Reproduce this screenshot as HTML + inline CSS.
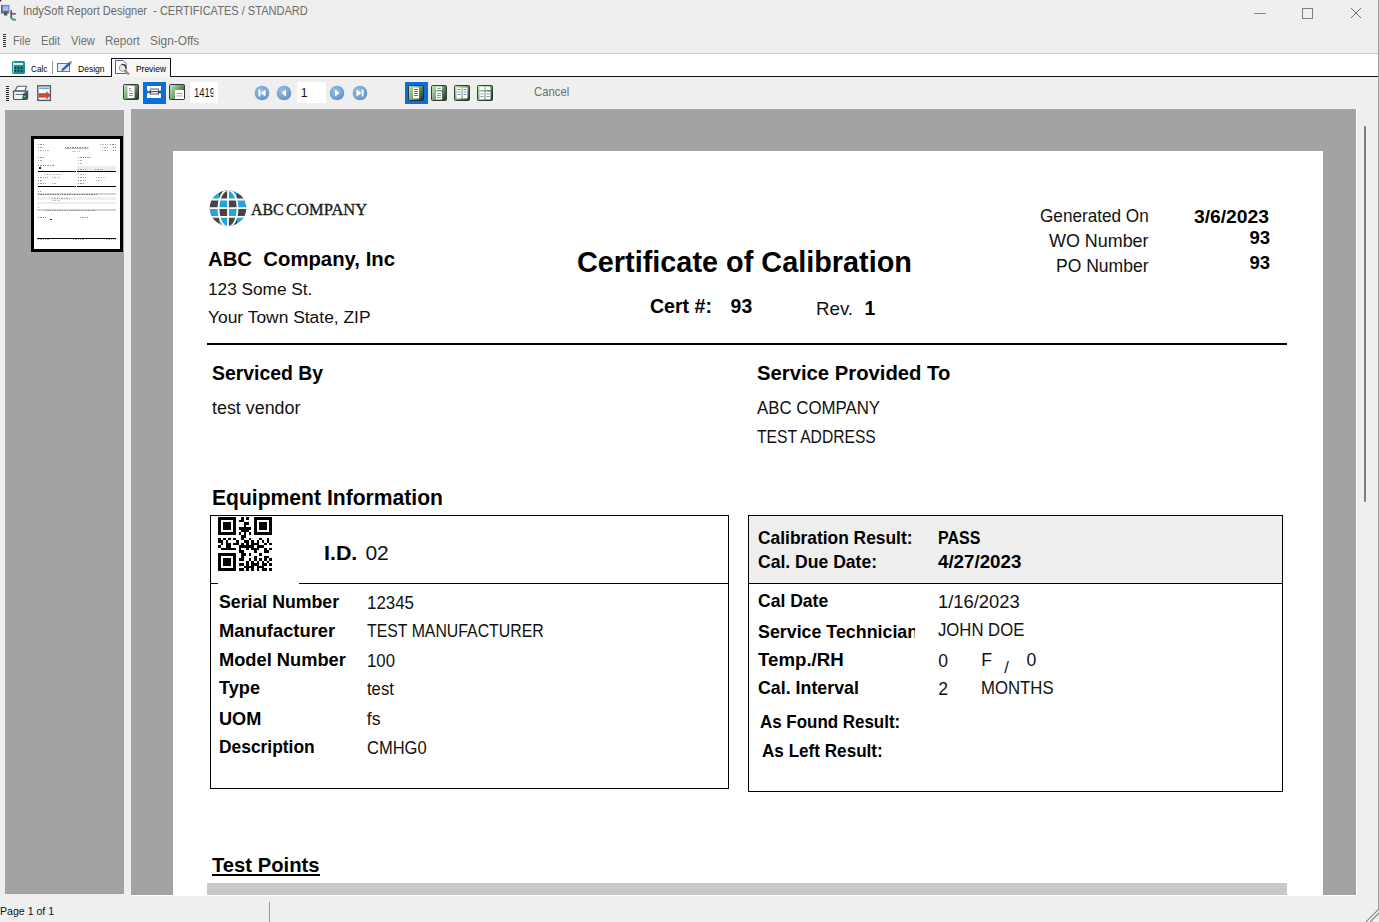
<!DOCTYPE html>
<html><head><meta charset="utf-8"><title>IndySoft Report Designer</title>
<style>
html,body{margin:0;padding:0;width:1379px;height:922px;overflow:hidden;background:#efefef;}
body{position:relative;font-family:"Liberation Sans", sans-serif;}
.t{position:absolute;white-space:pre;line-height:1;}
.r{position:absolute;}
svg.r{overflow:visible;}
</style></head><body>
<div class="r" style="left:0px;top:0px;width:1379px;height:922px;background:#efefef;"></div>
<svg class="r" style="left:0px;top:0px" width="20" height="24" viewBox="0 0 20 24">
<rect x="0" y="0" width="1.2" height="1.5" fill="#222"/>
<rect x="1.2" y="4.9" width="8.2" height="8.6" fill="#6a86c0"/><rect x="2.6" y="6.3" width="5.6" height="4.4" fill="#a9c0ee"/><rect x="1.2" y="4.9" width="1.2" height="8.6" fill="#4a5a80"/>
<path d="M3.8 11.2 L7.4 11.2 L7.4 15.6 L4 15.6 Z" fill="#4f5a4a"/>
<rect x="10.4" y="10.2" width="1.7" height="8" fill="#7a3f7a"/><rect x="10.4" y="13" width="5.5" height="1.6" fill="#934a8a"/>
<path d="M11.2 16.8 Q11.4 20.2 15.9 19.8" stroke="#1f9d9d" stroke-width="1.9" fill="none"/>
</svg>
<div class="t" style="left:22.50px;top:6.43px;font-size:11.9px;color:#6a6a6a;transform:scaleX(0.9288);transform-origin:0 0;">IndySoft Report Designer&nbsp; - CERTIFICATES / STANDARD</div>
<div class="r" style="left:1254px;top:13px;width:12px;height:1px;background:#858585;"></div>
<div class="r" style="left:1302px;top:8px;width:11px;height:11px;border:1px solid #808080;box-sizing:border-box;"></div>
<svg class="r" style="left:1350px;top:7px" width="12" height="12" viewBox="0 0 12 12"><path d="M1 1 L11 11 M11 1 L1 11" stroke="#707070" stroke-width="1"/></svg>
<svg class="r" style="left:3px;top:34px" width="3" height="13"><g fill="#333"><rect x="0" y="0" width="3" height="1"/><rect x="0" y="2" width="3" height="1"/><rect x="0" y="4" width="3" height="1"/><rect x="0" y="6" width="3" height="1"/><rect x="0" y="8" width="3" height="1"/><rect x="0" y="10" width="3" height="1"/><rect x="0" y="12" width="3" height="1"/></g></svg>
<div class="t" style="left:12.60px;top:35.44px;font-size:12px;color:#707070;transform:scaleX(0.9006);transform-origin:0 0;">File</div>
<div class="t" style="left:40.80px;top:35.44px;font-size:12px;color:#707070;transform:scaleX(0.9275);transform-origin:0 0;">Edit</div>
<div class="t" style="left:70.80px;top:35.44px;font-size:12px;color:#707070;transform:scaleX(0.9264);transform-origin:0 0;">View</div>
<div class="t" style="left:105.30px;top:35.44px;font-size:12px;color:#707070;transform:scaleX(0.9639);transform-origin:0 0;">Report</div>
<div class="t" style="left:150.40px;top:35.44px;font-size:12px;color:#707070;transform:scaleX(0.9880);transform-origin:0 0;">Sign-Offs</div>
<div class="r" style="left:0px;top:53px;width:1379px;height:1px;background:#c9c9c9;"></div>
<div class="r" style="left:0px;top:54px;width:1379px;height:22px;background:#fff;"></div>
<div class="r" style="left:0px;top:76px;width:1379px;height:1px;background:#111;"></div>
<div class="r" style="left:111px;top:58px;width:60px;height:19px;background:#f6f6f6;border:1px solid #111;border-bottom:none;box-sizing:border-box;"></div>
<svg class="r" style="left:12px;top:61px" width="13" height="13" viewBox="0 0 13 13">
<rect x="0" y="0" width="13" height="13" rx="1.5" fill="#1f8f8f"/><rect x="2" y="2" width="9" height="2" fill="#d8f0f0"/>
<g fill="#062a2a"><rect x="2.5" y="6" width="1.6" height="1.6"/><rect x="5.7" y="6" width="1.6" height="1.6"/><rect x="8.9" y="6" width="1.6" height="1.6"/><rect x="2.5" y="9" width="1.6" height="1.6"/><rect x="5.7" y="9" width="1.6" height="1.6"/><rect x="8.9" y="9" width="1.6" height="1.6"/></g><rect x="1" y="1" width="1" height="11" fill="#8fe0e0"/></svg>
<div class="t" style="left:31.30px;top:64.10px;font-size:9.8px;color:#000;transform:scaleX(0.8316);transform-origin:0 0;">Calc</div>
<div class="r" style="left:52px;top:61px;width:1px;height:13px;background:#9a9a9a;"></div>
<svg class="r" style="left:57px;top:60px" width="17" height="13" viewBox="0 0 17 13">
<rect x="0.5" y="3.5" width="12" height="8" fill="#e4ecfa" stroke="#5573b8"/>
<path d="M4 10 L12 2 L15 1 L14 4 L6 11 Z" fill="#3b5fb3"/><path d="M12 2 L15 1 L14 4 Z" fill="#e0b040"/>
</svg>
<div class="t" style="left:78.30px;top:64.10px;font-size:9.8px;color:#000;transform:scaleX(0.8714);transform-origin:0 0;">Design</div>
<svg class="r" style="left:114px;top:59px" width="18" height="18" viewBox="0 0 18 18">
<path d="M1.5 1.5 L9 1.5 L12 4.5 L12 14.5 L1.5 14.5 Z" fill="#fbfcff" stroke="#55608a" stroke-width="1"/>
<circle cx="8.5" cy="9" r="3.3" fill="#e4efdc" stroke="#8a96a0" stroke-width="0.9"/>
<path d="M7.5 5.5 A3.4 3.4 0 0 1 11.8 9.5" stroke="#2a3040" stroke-width="1.3" fill="none"/>
<path d="M10.8 11.5 L15 15.5" stroke="#a8865a" stroke-width="2.3"/>
</svg>
<div class="t" style="left:135.80px;top:64.10px;font-size:9.8px;color:#000;transform:scaleX(0.8599);transform-origin:0 0;">Preview</div>
<svg class="r" style="left:6px;top:86px" width="3" height="15"><g fill="#222"><rect y="0" width="3" height="1"/><rect y="2" width="3" height="1"/><rect y="4" width="3" height="1"/><rect y="6" width="3" height="1"/><rect y="8" width="3" height="1"/><rect y="10" width="3" height="1"/><rect y="12" width="3" height="1"/><rect y="14" width="3" height="1"/></g></svg>
<svg class="r" style="left:12px;top:85px" width="18" height="16" viewBox="0 0 18 16">
<path d="M5.4 1.3 L14.5 1.3 L13 6 L3 6 Z" fill="#fafafa" stroke="#5a5f6e" stroke-width="1.1"/>
<path d="M3.5 3.5 L4 3.5" stroke="#999" stroke-width="1"/>
<path d="M1.5 6.2 L15.6 6.2 L15.6 13 Q15.6 14.5 14 14.5 L3 14.5 Q1.5 14.5 1.5 13 Z" fill="#f2f2f4" stroke="#4e5464" stroke-width="1.2"/>
<path d="M3.5 9.5 L12.5 9.5" stroke="#6a7080" stroke-width="1"/>
<path d="M11.5 8 L15.6 6.5 L15.6 13 Q15.6 14.5 14 14.5 L10 14.5 Z" fill="#2f5e4a"/>
<rect x="11.8" y="10.7" width="1.6" height="1.4" fill="#6fe08f"/>
</svg>
<svg class="r" style="left:37px;top:85px" width="15" height="16" viewBox="0 0 15 16">
<rect x="0.8" y="0.8" width="12.6" height="14.6" fill="#fdfdfd" stroke="#4f5d6d" stroke-width="1.4"/>
<rect x="2.3" y="2.5" width="9.5" height="1.6" fill="#6f9fcf"/>
<path d="M2 8.6 L9.5 8.6 L9.5 6.8 L13.6 10.3 L9.5 14 L9.5 12.2 L2 12.2 Z" fill="#d9473a" stroke="#9a2e2a" stroke-width="0.5"/>
</svg>
<svg class="r" style="left:123px;top:84px" width="16" height="16" viewBox="0 0 16 16">
<defs><linearGradient id="g123" x1="0" x2="1" y1="0.2" y2="0.8"><stop offset="0" stop-color="#b9e0b0"/><stop offset="0.5" stop-color="#6f9f70"/><stop offset="1" stop-color="#263d2b"/></linearGradient></defs>
<rect x="0.5" y="0.5" width="15" height="15" rx="1" fill="url(#g123)" stroke="#243026" stroke-width="0.9"/><rect x="4.5" y="2" width="7" height="12" fill="#fff"/><g fill="#7a8aa0"><rect x="6" y="4" width="2" height="0.9"/><rect x="6" y="6.5" width="3" height="0.9"/><rect x="6" y="9" width="4" height="0.9"/><rect x="6" y="11" width="4" height="0.9"/></g></svg>
<div class="r" style="left:143px;top:82px;width:23px;height:22px;background:#0a6fd8;"></div>
<svg class="r" style="left:146px;top:85px" width="17" height="16" viewBox="0 0 17 16">
<path d="M1 1 L15 1 L15 5 L13 7 L15 9 L15 13 L1 13 L1 9 L3 7 L1 5 Z" fill="#fff"/><g fill="#4a5a6a"><rect x="4" y="3.5" width="9" height="1"/><rect x="4" y="6" width="9" height="1.2"/><rect x="4" y="8.5" width="9" height="1"/></g>
<path d="M2 7 L5 4.5 L5 9.5 Z" fill="#3a4a5a"/><path d="M15 7 L12 4.5 L12 9.5 Z" fill="#3a4a5a"/>
</svg>
<svg class="r" style="left:169px;top:84px" width="16" height="16" viewBox="0 0 16 16">
<defs><linearGradient id="g169" x1="0" x2="1" y1="0.2" y2="0.8"><stop offset="0" stop-color="#b9e0b0"/><stop offset="0.5" stop-color="#6f9f70"/><stop offset="1" stop-color="#263d2b"/></linearGradient></defs>
<rect x="0.5" y="0.5" width="15" height="15" rx="1" fill="url(#g169)" stroke="#243026" stroke-width="0.9"/><rect x="6" y="6" width="9" height="9" fill="#fff"/><g fill="#8a9aaa"><rect x="7.5" y="9" width="6" height="0.9"/><rect x="7.5" y="11.5" width="6" height="0.9"/></g></svg>
<div class="r" style="left:190px;top:82px;width:28px;height:21px;background:#fff;"></div>
<div class="t" style="left:193.50px;top:87.07px;font-size:12.2px;color:#111;transform:scaleX(0.7736);transform-origin:0 0;clip-path:inset(-5px 2px -5px -5px);">1419</div>
<svg class="r" style="left:253.5px;top:85px" width="16" height="16" viewBox="0 0 16 16">
<defs><radialGradient id="n261.5" cx="0.4" cy="0.35" r="0.7"><stop offset="0" stop-color="#9cc0e4"/><stop offset="1" stop-color="#5f91c4"/></radialGradient></defs>
<circle cx="8" cy="8" r="7.3" fill="url(#n261.5)"/><rect x="4.5" y="4.5" width="1.8" height="7" fill="#fff"/><path d="M11.5 4.5 L6.5 8 L11.5 11.5 Z" fill="#fff"/></svg>
<svg class="r" style="left:276.3px;top:85px" width="16" height="16" viewBox="0 0 16 16">
<defs><radialGradient id="n284.3" cx="0.4" cy="0.35" r="0.7"><stop offset="0" stop-color="#9cc0e4"/><stop offset="1" stop-color="#5f91c4"/></radialGradient></defs>
<circle cx="8" cy="8" r="7.3" fill="url(#n284.3)"/><path d="M10 4.5 L5.5 8 L10 11.5 Z" fill="#fff"/></svg>
<div class="r" style="left:297px;top:82px;width:29px;height:21px;background:#fff;"></div>
<div class="t" style="left:300.80px;top:87.17px;font-size:12.2px;color:#111;">1</div>
<svg class="r" style="left:329.2px;top:85px" width="16" height="16" viewBox="0 0 16 16">
<defs><radialGradient id="n337.2" cx="0.4" cy="0.35" r="0.7"><stop offset="0" stop-color="#9cc0e4"/><stop offset="1" stop-color="#5f91c4"/></radialGradient></defs>
<circle cx="8" cy="8" r="7.3" fill="url(#n337.2)"/><path d="M6 4.5 L10.5 8 L6 11.5 Z" fill="#fff"/></svg>
<svg class="r" style="left:352.1px;top:85px" width="16" height="16" viewBox="0 0 16 16">
<defs><radialGradient id="n360.1" cx="0.4" cy="0.35" r="0.7"><stop offset="0" stop-color="#9cc0e4"/><stop offset="1" stop-color="#5f91c4"/></radialGradient></defs>
<circle cx="8" cy="8" r="7.3" fill="url(#n360.1)"/><path d="M4.5 4.5 L9.5 8 L4.5 11.5 Z" fill="#fff"/><rect x="9.7" y="4.5" width="1.8" height="7" fill="#fff"/></svg>
<div class="r" style="left:405px;top:82px;width:23px;height:22px;background:#0a6fd8;"></div>
<svg class="r" style="left:408px;top:84.5px" width="16" height="16" viewBox="0 0 16 16">
<defs><linearGradient id="g408" x1="0" x2="1" y1="0.2" y2="0.8"><stop offset="0" stop-color="#b9e0b0"/><stop offset="0.5" stop-color="#6f9f70"/><stop offset="1" stop-color="#263d2b"/></linearGradient></defs>
<rect x="0.5" y="0.5" width="15" height="15" rx="1" fill="url(#g408)" stroke="#243026" stroke-width="0.9"/><rect x="5" y="2.5" width="6" height="11" fill="#fff"/><g fill="#3a6ad0"><rect x="6" y="4" width="4" height="0.9"/><rect x="6" y="6" width="4" height="0.9"/><rect x="6" y="8" width="4" height="0.9"/><rect x="6" y="10" width="4" height="0.9"/></g></svg>
<svg class="r" style="left:431px;top:84.5px" width="16" height="16" viewBox="0 0 16 16">
<defs><linearGradient id="g431" x1="0" x2="1" y1="0.2" y2="0.8"><stop offset="0" stop-color="#b9e0b0"/><stop offset="0.5" stop-color="#6f9f70"/><stop offset="1" stop-color="#263d2b"/></linearGradient></defs>
<rect x="0.5" y="0.5" width="15" height="15" rx="1" fill="url(#g431)" stroke="#243026" stroke-width="0.9"/><rect x="5" y="1.5" width="6" height="3.5" fill="#fff"/><rect x="5" y="6.5" width="6" height="8" fill="#fff"/><g fill="#6a8ab0"><rect x="6" y="2.8" width="4" height="0.9"/><rect x="6" y="8" width="4" height="0.9"/><rect x="6" y="10" width="4" height="0.9"/><rect x="6" y="12" width="4" height="0.9"/></g></svg>
<svg class="r" style="left:454px;top:84.5px" width="16" height="16" viewBox="0 0 16 16">
<defs><linearGradient id="g454" x1="0" x2="1" y1="0.2" y2="0.8"><stop offset="0" stop-color="#b9e0b0"/><stop offset="0.5" stop-color="#6f9f70"/><stop offset="1" stop-color="#263d2b"/></linearGradient></defs>
<rect x="0.5" y="0.5" width="15" height="15" rx="1" fill="url(#g454)" stroke="#243026" stroke-width="0.9"/><rect x="2.5" y="2.5" width="5" height="11" fill="#fff"/><rect x="8.5" y="2.5" width="5" height="11" fill="#fff"/><g fill="#6a8ab0"><rect x="3.5" y="4" width="3" height="0.9"/><rect x="3.5" y="6.5" width="3" height="0.9"/><rect x="3.5" y="9" width="3" height="0.9"/><rect x="9.5" y="4" width="3" height="0.9"/><rect x="9.5" y="6.5" width="3" height="0.9"/><rect x="9.5" y="9" width="3" height="0.9"/></g></svg>
<svg class="r" style="left:477px;top:84.5px" width="16" height="16" viewBox="0 0 16 16">
<defs><linearGradient id="g477" x1="0" x2="1" y1="0.2" y2="0.8"><stop offset="0" stop-color="#b9e0b0"/><stop offset="0.5" stop-color="#6f9f70"/><stop offset="1" stop-color="#263d2b"/></linearGradient></defs>
<rect x="0.5" y="0.5" width="15" height="15" rx="1" fill="url(#g477)" stroke="#243026" stroke-width="0.9"/><rect x="2.5" y="1.5" width="5" height="3.5" fill="#fff"/><rect x="8.5" y="1.5" width="5" height="3.5" fill="#fff"/><rect x="2.5" y="6.5" width="5" height="8" fill="#fff"/><rect x="8.5" y="6.5" width="5" height="8" fill="#fff"/><g fill="#6a8ab0"><rect x="3.5" y="8.5" width="3" height="0.9"/><rect x="3.5" y="11" width="3" height="0.9"/><rect x="9.5" y="8.5" width="3" height="0.9"/><rect x="9.5" y="11" width="3" height="0.9"/></g></svg>
<div class="t" style="left:534.40px;top:87.43px;font-size:11.9px;color:#6d6d6d;transform:scaleX(0.9523);transform-origin:0 0;">Cancel</div>
<div class="r" style="left:5px;top:110px;width:119px;height:784px;background:#a3a3a3;"></div>
<div class="r" style="left:131px;top:109px;width:1225px;height:786px;background:#a3a2a5;"></div>
<div class="r" style="left:31px;top:136px;width:92px;height:116px;background:#fff;border:3px solid #000;box-sizing:border-box;"></div>
<div class="r" style="left:38px;top:144px;width:6px;height:1px;background:repeating-linear-gradient(90deg,#444 0 1px,transparent 1px 1.7px);opacity:0.55;"></div>
<div class="r" style="left:38px;top:147px;width:4px;height:1px;background:repeating-linear-gradient(90deg,#444 0 1px,transparent 1px 1.7px);opacity:0.55;"></div>
<div class="r" style="left:38px;top:150px;width:12px;height:1px;background:repeating-linear-gradient(90deg,#777 0 1px,transparent 1px 1.7px);opacity:0.55;"></div>
<div class="r" style="left:65px;top:147px;width:24px;height:1px;background:repeating-linear-gradient(90deg,#222 0 1px,transparent 1px 1.7px);opacity:0.55;"></div>
<div class="r" style="left:65px;top:147.5px;width:24px;height:1px;background:rgba(0,0,0,0.25);"></div>
<div class="r" style="left:72px;top:151px;width:9px;height:1px;background:repeating-linear-gradient(90deg,#888 0 1px,transparent 1px 1.7px);opacity:0.55;"></div>
<div class="r" style="left:100px;top:144px;width:8px;height:1px;background:repeating-linear-gradient(90deg,#777 0 1px,transparent 1px 1.7px);opacity:0.55;"></div>
<div class="r" style="left:110px;top:144px;width:6px;height:1px;background:repeating-linear-gradient(90deg,#222 0 1px,transparent 1px 1.7px);opacity:0.55;"></div>
<div class="r" style="left:102px;top:147px;width:6px;height:1px;background:repeating-linear-gradient(90deg,#777 0 1px,transparent 1px 1.7px);opacity:0.55;"></div>
<div class="r" style="left:113px;top:147px;width:3px;height:1px;background:repeating-linear-gradient(90deg,#222 0 1px,transparent 1px 1.7px);opacity:0.55;"></div>
<div class="r" style="left:102px;top:150px;width:6px;height:1px;background:repeating-linear-gradient(90deg,#777 0 1px,transparent 1px 1.7px);opacity:0.55;"></div>
<div class="r" style="left:113px;top:150px;width:3px;height:1px;background:repeating-linear-gradient(90deg,#222 0 1px,transparent 1px 1.7px);opacity:0.55;"></div>
<div class="r" style="left:38px;top:157px;width:7px;height:1px;background:repeating-linear-gradient(90deg,#333 0 1px,transparent 1px 1.7px);opacity:0.55;"></div>
<div class="r" style="left:38px;top:160px;width:4px;height:1px;background:repeating-linear-gradient(90deg,#777 0 1px,transparent 1px 1.7px);opacity:0.55;"></div>
<div class="r" style="left:78px;top:157px;width:14px;height:1px;background:repeating-linear-gradient(90deg,#333 0 1px,transparent 1px 1.7px);opacity:0.55;"></div>
<div class="r" style="left:78px;top:160px;width:5px;height:1px;background:repeating-linear-gradient(90deg,#777 0 1px,transparent 1px 1.7px);opacity:0.55;"></div>
<div class="r" style="left:78px;top:163px;width:5px;height:1px;background:repeating-linear-gradient(90deg,#777 0 1px,transparent 1px 1.7px);opacity:0.55;"></div>
<div class="r" style="left:38px;top:165px;width:16px;height:1px;background:repeating-linear-gradient(90deg,#333 0 1px,transparent 1px 1.7px);opacity:0.55;"></div>
<div class="r" style="left:39px;top:167px;width:2px;height:2px;background:#222;"></div>
<div class="r" style="left:77px;top:166px;width:39px;height:5px;background:#ececec;"></div>
<div class="r" style="left:78px;top:169px;width:9px;height:1px;background:repeating-linear-gradient(90deg,#555 0 1px,transparent 1px 1.7px);opacity:0.55;"></div>
<div class="r" style="left:95px;top:169px;width:8px;height:1px;background:repeating-linear-gradient(90deg,#555 0 1px,transparent 1px 1.7px);opacity:0.55;"></div>
<div class="r" style="left:38px;top:171px;width:38px;height:1.3px;background:#000;"></div>
<div class="r" style="left:77px;top:171px;width:39px;height:1.3px;background:#000;"></div>
<div class="r" style="left:44px;top:174px;width:18px;height:1px;background:repeating-linear-gradient(90deg,#888 0 1px,transparent 1px 1.7px);opacity:0.55;"></div>
<div class="r" style="left:78px;top:174px;width:6px;height:1px;background:repeating-linear-gradient(90deg,#777 0 1px,transparent 1px 1.7px);opacity:0.55;"></div>
<div class="r" style="left:38px;top:177px;width:10px;height:1px;background:repeating-linear-gradient(90deg,#444 0 1px,transparent 1px 1.7px);opacity:0.55;"></div>
<div class="r" style="left:52px;top:177px;width:8px;height:1px;background:repeating-linear-gradient(90deg,#777 0 1px,transparent 1px 1.7px);opacity:0.55;"></div>
<div class="r" style="left:78px;top:177px;width:8px;height:1px;background:repeating-linear-gradient(90deg,#444 0 1px,transparent 1px 1.7px);opacity:0.55;"></div>
<div class="r" style="left:96px;top:177px;width:10px;height:1px;background:repeating-linear-gradient(90deg,#777 0 1px,transparent 1px 1.7px);opacity:0.55;"></div>
<div class="r" style="left:38px;top:180px;width:4px;height:1px;background:repeating-linear-gradient(90deg,#444 0 1px,transparent 1px 1.7px);opacity:0.55;"></div>
<div class="r" style="left:78px;top:180px;width:8px;height:1px;background:repeating-linear-gradient(90deg,#444 0 1px,transparent 1px 1.7px);opacity:0.55;"></div>
<div class="r" style="left:96px;top:180px;width:6px;height:1px;background:repeating-linear-gradient(90deg,#777 0 1px,transparent 1px 1.7px);opacity:0.55;"></div>
<div class="r" style="left:38px;top:183px;width:8px;height:1px;background:repeating-linear-gradient(90deg,#444 0 1px,transparent 1px 1.7px);opacity:0.55;"></div>
<div class="r" style="left:52px;top:183px;width:4px;height:1px;background:repeating-linear-gradient(90deg,#777 0 1px,transparent 1px 1.7px);opacity:0.55;"></div>
<div class="r" style="left:78px;top:183px;width:6px;height:1px;background:repeating-linear-gradient(90deg,#444 0 1px,transparent 1px 1.7px);opacity:0.55;"></div>
<div class="r" style="left:38px;top:186px;width:38px;height:1.3px;background:#000;"></div>
<div class="r" style="left:77px;top:186px;width:39px;height:1.3px;background:#000;"></div>
<div class="r" style="left:38px;top:191px;width:3px;height:1px;background:repeating-linear-gradient(90deg,#333 0 1px,transparent 1px 1.7px);opacity:0.55;"></div>
<div class="r" style="left:37px;top:193px;width:79px;height:2px;background:#d4d4d4;"></div>
<div class="r" style="left:38px;top:194px;width:60px;height:1px;background:repeating-linear-gradient(90deg,#333 0 1px,transparent 1px 1.7px);opacity:0.55;"></div>
<div class="r" style="left:37px;top:197px;width:79px;height:3px;background:#efefef;"></div>
<div class="r" style="left:52px;top:198px;width:18px;height:1px;background:repeating-linear-gradient(90deg,#777 0 1px,transparent 1px 1.7px);opacity:0.55;"></div>
<div class="r" style="left:37px;top:202px;width:79px;height:1.5px;background:#ececec;"></div>
<div class="r" style="left:52px;top:200px;width:8px;height:1px;background:repeating-linear-gradient(90deg,#777 0 1px,transparent 1px 1.7px);opacity:0.55;"></div>
<div class="r" style="left:38px;top:207px;width:2px;height:1px;background:repeating-linear-gradient(90deg,#555 0 1px,transparent 1px 1.7px);opacity:0.55;"></div>
<div class="r" style="left:37px;top:209px;width:79px;height:1.5px;background:#d4d4d4;"></div>
<div class="r" style="left:45px;top:209.5px;width:50px;height:1px;background:repeating-linear-gradient(90deg,#666 0 1px,transparent 1px 1.7px);opacity:0.55;"></div>
<div class="r" style="left:38px;top:217px;width:8px;height:1px;background:repeating-linear-gradient(90deg,#333 0 1px,transparent 1px 1.7px);opacity:0.55;"></div>
<div class="r" style="left:50px;top:219px;width:2px;height:1px;background:#222;"></div>
<div class="r" style="left:80px;top:217px;width:8px;height:1px;background:repeating-linear-gradient(90deg,#444 0 1px,transparent 1px 1.7px);opacity:0.55;"></div>
<div class="r" style="left:37px;top:238px;width:79px;height:1.2px;background:#111;"></div>
<div class="r" style="left:38px;top:239px;width:12px;height:1px;background:repeating-linear-gradient(90deg,#666 0 1px,transparent 1px 1.7px);opacity:0.55;"></div>
<div class="r" style="left:73px;top:239px;width:12px;height:1px;background:repeating-linear-gradient(90deg,#666 0 1px,transparent 1px 1.7px);opacity:0.55;"></div>
<div class="r" style="left:106px;top:239px;width:10px;height:1px;background:repeating-linear-gradient(90deg,#666 0 1px,transparent 1px 1.7px);opacity:0.55;"></div>
<div class="r" style="left:1364px;top:126px;width:2px;height:376px;background:#7d7d7d;border-radius:1px;"></div>
<div class="r" style="left:1378px;top:0px;width:1px;height:910px;background:#a0a0a0;"></div>
<div class="r" style="left:1356px;top:109px;width:1px;height:787px;background:#fff;"></div>
<div class="r" style="left:131px;top:895px;width:1226px;height:1px;background:#fff;"></div>
<svg class="r" style="left:1365px;top:908px" width="14" height="14" viewBox="0 0 14 14"><path d="M1 14 L14 1 M5 14 L14 5" stroke="#8a8a8a" stroke-width="1.3"/><path d="M2.5 14 L14 2.5" stroke="#fff" stroke-width="0.8"/></svg>
<div class="t" style="left:0.00px;top:907.47px;font-size:10.2px;color:#111;transform:scaleX(1.0389);transform-origin:0 0;">Page 1 of 1</div>
<div class="r" style="left:269px;top:902px;width:1px;height:20px;background:#9a9a9a;"></div>
<div class="r" style="left:173px;top:151px;width:1150px;height:744px;background:#fff;"></div>
<svg class="r" style="left:208.5px;top:190.3px" width="38" height="37" viewBox="0 0 38 37">
<defs><clipPath id="gl"><ellipse cx="19" cy="18.2" rx="18.3" ry="17.9"/></clipPath></defs>
<g clip-path="url(#gl)">
<rect x="0" y="0" width="10" height="9" fill="#27a3d9"/><rect x="10" y="0" width="9" height="9" fill="#454545"/><rect x="19" y="0" width="9" height="9" fill="#27a3d9"/><rect x="28" y="0" width="10" height="9" fill="#454545"/>
<rect x="0" y="9" width="10" height="9" fill="#454545"/><rect x="10" y="9" width="9" height="9" fill="#27a3d9"/><rect x="19" y="9" width="9" height="9" fill="#454545"/><rect x="28" y="9" width="10" height="9" fill="#27a3d9"/>
<rect x="0" y="18" width="10" height="9" fill="#27a3d9"/><rect x="10" y="18" width="9" height="9" fill="#454545"/><rect x="19" y="18" width="9" height="9" fill="#27a3d9"/><rect x="28" y="18" width="10" height="9" fill="#454545"/>
<rect x="0" y="27" width="10" height="10" fill="#454545"/><rect x="10" y="27" width="9" height="10" fill="#27a3d9"/><rect x="19" y="27" width="9" height="10" fill="#454545"/><rect x="28" y="27" width="10" height="10" fill="#27a3d9"/>
<path d="M0 9.5 H38 M0 18.2 H38 M0 26.8 H38" stroke="#fff" stroke-width="1.8"/>
<path d="M19 -1 V38 M19 0 A9.5 18.5 0 0 0 19 37 M19 0 A9.5 18.5 0 0 1 19 37" stroke="#fff" stroke-width="1.8" fill="none"/>
</g></svg>
<div class="t" style="left:250.90px;top:200.84px;font-size:17.2px;color:#1a1a1a;font-family:'Liberation Serif',serif;transform:scaleX(0.9251);transform-origin:0 0;-webkit-text-stroke:0.35px #1a1a1a;">ABC</div>
<div class="t" style="left:285.50px;top:200.84px;font-size:17.2px;color:#1a1a1a;font-family:'Liberation Serif',serif;transform:scaleX(0.9627);transform-origin:0 0;-webkit-text-stroke:0.35px #1a1a1a;">COMPANY</div>
<div class="t" style="left:208.00px;top:249.47px;font-size:20px;font-weight:700;color:#000;transform:scaleX(1.0158);transform-origin:0 0;">ABC&nbsp; Company, Inc</div>
<div class="t" style="left:208.00px;top:280.64px;font-size:17.2px;color:#111;transform:scaleX(1.0026);transform-origin:0 0;">123 Some St.</div>
<div class="t" style="left:208.00px;top:309.04px;font-size:17.2px;color:#111;transform:scaleX(1.0128);transform-origin:0 0;">Your Town State, ZIP</div>
<div class="t" style="left:576.80px;top:247.85px;font-size:29px;font-weight:700;color:#000;transform:scaleX(0.9946);transform-origin:0 0;">Certificate of Calibration</div>
<div class="t" style="left:650.00px;top:297.48px;font-size:19.4px;font-weight:700;color:#000;transform:scaleX(1.0082);transform-origin:0 0;">Cert #:</div>
<div class="t" style="left:730.60px;top:297.48px;font-size:19.4px;font-weight:700;color:#000;">93</div>
<div class="t" style="left:816.00px;top:300.24px;font-size:18.5px;color:#111;transform:scaleX(1.0101);transform-origin:0 0;">Rev.</div>
<div class="t" style="left:864.60px;top:299.48px;font-size:19.4px;font-weight:700;color:#000;">1</div>
<div class="t" style="left:1039.80px;top:207.39px;font-size:18.2px;color:#111;transform:scaleX(0.9429);transform-origin:0 0;">Generated On</div>
<div class="t" style="left:1049.00px;top:232.19px;font-size:18.2px;color:#111;transform:scaleX(0.9852);transform-origin:0 0;">WO Number</div>
<div class="t" style="left:1056.00px;top:256.79px;font-size:18.2px;color:#111;transform:scaleX(0.9636);transform-origin:0 0;">PO Number</div>
<div class="t" style="left:1194.30px;top:207.54px;font-size:18.5px;font-weight:700;color:#000;transform:scaleX(1.0408);transform-origin:0 0;">3/6/2023</div>
<div class="t" style="left:1249.50px;top:229.34px;font-size:18.5px;font-weight:700;color:#000;">93</div>
<div class="t" style="left:1249.50px;top:254.34px;font-size:18.5px;font-weight:700;color:#000;">93</div>
<div class="r" style="left:207px;top:343px;width:1080px;height:2px;background:#000;"></div>
<div class="t" style="left:211.80px;top:363.33px;font-size:20.4px;font-weight:700;color:#000;transform:scaleX(0.9513);transform-origin:0 0;">Serviced By</div>
<div class="t" style="left:211.80px;top:399.70px;font-size:17.6px;color:#111;transform:scaleX(1.0157);transform-origin:0 0;">test vendor</div>
<div class="t" style="left:757.00px;top:362.53px;font-size:20.4px;font-weight:700;color:#000;transform:scaleX(0.9938);transform-origin:0 0;">Service Provided To</div>
<div class="t" style="left:757.40px;top:399.70px;font-size:17.6px;color:#111;transform:scaleX(0.9562);transform-origin:0 0;">ABC COMPANY</div>
<div class="t" style="left:757.40px;top:428.60px;font-size:17.6px;color:#111;transform:scaleX(0.8887);transform-origin:0 0;">TEST ADDRESS</div>
<div class="t" style="left:211.50px;top:487.15px;font-size:21.2px;font-weight:700;color:#000;transform:scaleX(0.9960);transform-origin:0 0;">Equipment Information</div>
<div class="r" style="left:210px;top:515px;width:519px;height:274px;border:1px solid #000;box-sizing:border-box;"></div>
<div class="r" style="left:299px;top:583px;width:430px;height:1px;background:#000;"></div>
<div class="r" style="left:210px;top:583px;width:8px;height:1px;background:#000;"></div>
<svg class="r" style="left:218px;top:517px" width="54" height="54" viewBox="0 0 54 54" shape-rendering="crispEdges"><path d="M0.000 0.000h2.571v2.571h-2.571zM2.571 0.000h2.571v2.571h-2.571zM5.143 0.000h2.571v2.571h-2.571zM7.714 0.000h2.571v2.571h-2.571zM10.286 0.000h2.571v2.571h-2.571zM12.857 0.000h2.571v2.571h-2.571zM15.429 0.000h2.571v2.571h-2.571zM23.143 0.000h2.571v2.571h-2.571zM28.286 0.000h2.571v2.571h-2.571zM36.000 0.000h2.571v2.571h-2.571zM38.571 0.000h2.571v2.571h-2.571zM41.143 0.000h2.571v2.571h-2.571zM43.714 0.000h2.571v2.571h-2.571zM46.286 0.000h2.571v2.571h-2.571zM48.857 0.000h2.571v2.571h-2.571zM51.429 0.000h2.571v2.571h-2.571zM0.000 2.571h2.571v2.571h-2.571zM15.429 2.571h2.571v2.571h-2.571zM20.571 2.571h2.571v2.571h-2.571zM23.143 2.571h2.571v2.571h-2.571zM36.000 2.571h2.571v2.571h-2.571zM51.429 2.571h2.571v2.571h-2.571zM0.000 5.143h2.571v2.571h-2.571zM5.143 5.143h2.571v2.571h-2.571zM7.714 5.143h2.571v2.571h-2.571zM10.286 5.143h2.571v2.571h-2.571zM15.429 5.143h2.571v2.571h-2.571zM25.714 5.143h2.571v2.571h-2.571zM28.286 5.143h2.571v2.571h-2.571zM36.000 5.143h2.571v2.571h-2.571zM41.143 5.143h2.571v2.571h-2.571zM43.714 5.143h2.571v2.571h-2.571zM46.286 5.143h2.571v2.571h-2.571zM51.429 5.143h2.571v2.571h-2.571zM0.000 7.714h2.571v2.571h-2.571zM5.143 7.714h2.571v2.571h-2.571zM7.714 7.714h2.571v2.571h-2.571zM10.286 7.714h2.571v2.571h-2.571zM15.429 7.714h2.571v2.571h-2.571zM25.714 7.714h2.571v2.571h-2.571zM36.000 7.714h2.571v2.571h-2.571zM41.143 7.714h2.571v2.571h-2.571zM43.714 7.714h2.571v2.571h-2.571zM46.286 7.714h2.571v2.571h-2.571zM51.429 7.714h2.571v2.571h-2.571zM0.000 10.286h2.571v2.571h-2.571zM5.143 10.286h2.571v2.571h-2.571zM7.714 10.286h2.571v2.571h-2.571zM10.286 10.286h2.571v2.571h-2.571zM15.429 10.286h2.571v2.571h-2.571zM20.571 10.286h2.571v2.571h-2.571zM23.143 10.286h2.571v2.571h-2.571zM25.714 10.286h2.571v2.571h-2.571zM28.286 10.286h2.571v2.571h-2.571zM30.857 10.286h2.571v2.571h-2.571zM36.000 10.286h2.571v2.571h-2.571zM41.143 10.286h2.571v2.571h-2.571zM43.714 10.286h2.571v2.571h-2.571zM46.286 10.286h2.571v2.571h-2.571zM51.429 10.286h2.571v2.571h-2.571zM0.000 12.857h2.571v2.571h-2.571zM15.429 12.857h2.571v2.571h-2.571zM23.143 12.857h2.571v2.571h-2.571zM25.714 12.857h2.571v2.571h-2.571zM28.286 12.857h2.571v2.571h-2.571zM36.000 12.857h2.571v2.571h-2.571zM51.429 12.857h2.571v2.571h-2.571zM0.000 15.429h2.571v2.571h-2.571zM2.571 15.429h2.571v2.571h-2.571zM5.143 15.429h2.571v2.571h-2.571zM7.714 15.429h2.571v2.571h-2.571zM10.286 15.429h2.571v2.571h-2.571zM12.857 15.429h2.571v2.571h-2.571zM15.429 15.429h2.571v2.571h-2.571zM20.571 15.429h2.571v2.571h-2.571zM25.714 15.429h2.571v2.571h-2.571zM30.857 15.429h2.571v2.571h-2.571zM36.000 15.429h2.571v2.571h-2.571zM38.571 15.429h2.571v2.571h-2.571zM41.143 15.429h2.571v2.571h-2.571zM43.714 15.429h2.571v2.571h-2.571zM46.286 15.429h2.571v2.571h-2.571zM48.857 15.429h2.571v2.571h-2.571zM51.429 15.429h2.571v2.571h-2.571zM23.143 18.000h2.571v2.571h-2.571zM25.714 18.000h2.571v2.571h-2.571zM0.000 20.571h2.571v2.571h-2.571zM5.143 20.571h2.571v2.571h-2.571zM10.286 20.571h2.571v2.571h-2.571zM15.429 20.571h2.571v2.571h-2.571zM23.143 20.571h2.571v2.571h-2.571zM30.857 20.571h2.571v2.571h-2.571zM41.143 20.571h2.571v2.571h-2.571zM48.857 20.571h2.571v2.571h-2.571zM0.000 23.143h2.571v2.571h-2.571zM2.571 23.143h2.571v2.571h-2.571zM7.714 23.143h2.571v2.571h-2.571zM18.000 23.143h2.571v2.571h-2.571zM25.714 23.143h2.571v2.571h-2.571zM28.286 23.143h2.571v2.571h-2.571zM33.429 23.143h2.571v2.571h-2.571zM38.571 23.143h2.571v2.571h-2.571zM43.714 23.143h2.571v2.571h-2.571zM48.857 23.143h2.571v2.571h-2.571zM2.571 25.714h2.571v2.571h-2.571zM7.714 25.714h2.571v2.571h-2.571zM10.286 25.714h2.571v2.571h-2.571zM15.429 25.714h2.571v2.571h-2.571zM18.000 25.714h2.571v2.571h-2.571zM23.143 25.714h2.571v2.571h-2.571zM28.286 25.714h2.571v2.571h-2.571zM33.429 25.714h2.571v2.571h-2.571zM36.000 25.714h2.571v2.571h-2.571zM38.571 25.714h2.571v2.571h-2.571zM46.286 25.714h2.571v2.571h-2.571zM51.429 25.714h2.571v2.571h-2.571zM0.000 28.286h2.571v2.571h-2.571zM7.714 28.286h2.571v2.571h-2.571zM10.286 28.286h2.571v2.571h-2.571zM20.571 28.286h2.571v2.571h-2.571zM23.143 28.286h2.571v2.571h-2.571zM25.714 28.286h2.571v2.571h-2.571zM28.286 28.286h2.571v2.571h-2.571zM30.857 28.286h2.571v2.571h-2.571zM33.429 28.286h2.571v2.571h-2.571zM38.571 28.286h2.571v2.571h-2.571zM41.143 28.286h2.571v2.571h-2.571zM43.714 28.286h2.571v2.571h-2.571zM2.571 30.857h2.571v2.571h-2.571zM5.143 30.857h2.571v2.571h-2.571zM7.714 30.857h2.571v2.571h-2.571zM10.286 30.857h2.571v2.571h-2.571zM12.857 30.857h2.571v2.571h-2.571zM15.429 30.857h2.571v2.571h-2.571zM20.571 30.857h2.571v2.571h-2.571zM28.286 30.857h2.571v2.571h-2.571zM33.429 30.857h2.571v2.571h-2.571zM36.000 30.857h2.571v2.571h-2.571zM38.571 30.857h2.571v2.571h-2.571zM46.286 30.857h2.571v2.571h-2.571zM51.429 30.857h2.571v2.571h-2.571zM20.571 33.429h2.571v2.571h-2.571zM23.143 33.429h2.571v2.571h-2.571zM36.000 33.429h2.571v2.571h-2.571zM46.286 33.429h2.571v2.571h-2.571zM48.857 33.429h2.571v2.571h-2.571zM0.000 36.000h2.571v2.571h-2.571zM2.571 36.000h2.571v2.571h-2.571zM5.143 36.000h2.571v2.571h-2.571zM7.714 36.000h2.571v2.571h-2.571zM10.286 36.000h2.571v2.571h-2.571zM12.857 36.000h2.571v2.571h-2.571zM15.429 36.000h2.571v2.571h-2.571zM23.143 36.000h2.571v2.571h-2.571zM25.714 36.000h2.571v2.571h-2.571zM30.857 36.000h2.571v2.571h-2.571zM41.143 36.000h2.571v2.571h-2.571zM0.000 38.571h2.571v2.571h-2.571zM15.429 38.571h2.571v2.571h-2.571zM23.143 38.571h2.571v2.571h-2.571zM36.000 38.571h2.571v2.571h-2.571zM46.286 38.571h2.571v2.571h-2.571zM48.857 38.571h2.571v2.571h-2.571zM0.000 41.143h2.571v2.571h-2.571zM5.143 41.143h2.571v2.571h-2.571zM7.714 41.143h2.571v2.571h-2.571zM10.286 41.143h2.571v2.571h-2.571zM15.429 41.143h2.571v2.571h-2.571zM20.571 41.143h2.571v2.571h-2.571zM23.143 41.143h2.571v2.571h-2.571zM30.857 41.143h2.571v2.571h-2.571zM36.000 41.143h2.571v2.571h-2.571zM41.143 41.143h2.571v2.571h-2.571zM46.286 41.143h2.571v2.571h-2.571zM51.429 41.143h2.571v2.571h-2.571zM0.000 43.714h2.571v2.571h-2.571zM5.143 43.714h2.571v2.571h-2.571zM7.714 43.714h2.571v2.571h-2.571zM10.286 43.714h2.571v2.571h-2.571zM15.429 43.714h2.571v2.571h-2.571zM28.286 43.714h2.571v2.571h-2.571zM33.429 43.714h2.571v2.571h-2.571zM38.571 43.714h2.571v2.571h-2.571zM43.714 43.714h2.571v2.571h-2.571zM48.857 43.714h2.571v2.571h-2.571zM0.000 46.286h2.571v2.571h-2.571zM5.143 46.286h2.571v2.571h-2.571zM7.714 46.286h2.571v2.571h-2.571zM10.286 46.286h2.571v2.571h-2.571zM15.429 46.286h2.571v2.571h-2.571zM20.571 46.286h2.571v2.571h-2.571zM23.143 46.286h2.571v2.571h-2.571zM28.286 46.286h2.571v2.571h-2.571zM33.429 46.286h2.571v2.571h-2.571zM36.000 46.286h2.571v2.571h-2.571zM38.571 46.286h2.571v2.571h-2.571zM43.714 46.286h2.571v2.571h-2.571zM46.286 46.286h2.571v2.571h-2.571zM51.429 46.286h2.571v2.571h-2.571zM0.000 48.857h2.571v2.571h-2.571zM15.429 48.857h2.571v2.571h-2.571zM25.714 48.857h2.571v2.571h-2.571zM28.286 48.857h2.571v2.571h-2.571zM30.857 48.857h2.571v2.571h-2.571zM33.429 48.857h2.571v2.571h-2.571zM38.571 48.857h2.571v2.571h-2.571zM41.143 48.857h2.571v2.571h-2.571zM43.714 48.857h2.571v2.571h-2.571zM0.000 51.429h2.571v2.571h-2.571zM2.571 51.429h2.571v2.571h-2.571zM5.143 51.429h2.571v2.571h-2.571zM7.714 51.429h2.571v2.571h-2.571zM10.286 51.429h2.571v2.571h-2.571zM12.857 51.429h2.571v2.571h-2.571zM15.429 51.429h2.571v2.571h-2.571zM20.571 51.429h2.571v2.571h-2.571zM23.143 51.429h2.571v2.571h-2.571zM28.286 51.429h2.571v2.571h-2.571zM33.429 51.429h2.571v2.571h-2.571zM38.571 51.429h2.571v2.571h-2.571zM43.714 51.429h2.571v2.571h-2.571zM46.286 51.429h2.571v2.571h-2.571zM51.429 51.429h2.571v2.571h-2.571z" fill="#000"/></svg>
<div class="t" style="left:324.00px;top:542.12px;font-size:21px;font-weight:700;color:#000;transform:scaleX(1.0198);transform-origin:0 0;">I.D.</div>
<div class="t" style="left:365.40px;top:542.12px;font-size:21px;color:#111;">02</div>
<div class="t" style="left:218.80px;top:592.92px;font-size:18.4px;font-weight:700;color:#000;transform:scaleX(0.9627);transform-origin:0 0;">Serial Number</div>
<div class="t" style="left:366.80px;top:594.50px;font-size:17.6px;color:#111;transform:scaleX(0.9586);transform-origin:0 0;">12345</div>
<div class="t" style="left:218.80px;top:621.82px;font-size:18.4px;font-weight:700;color:#000;transform:scaleX(0.9969);transform-origin:0 0;">Manufacturer</div>
<div class="t" style="left:366.80px;top:623.40px;font-size:17.6px;color:#111;transform:scaleX(0.9009);transform-origin:0 0;">TEST MANUFACTURER</div>
<div class="t" style="left:218.80px;top:651.02px;font-size:18.4px;font-weight:700;color:#000;transform:scaleX(0.9931);transform-origin:0 0;">Model Number</div>
<div class="t" style="left:366.80px;top:653.10px;font-size:17.6px;color:#111;transform:scaleX(0.9526);transform-origin:0 0;">100</div>
<div class="t" style="left:218.80px;top:679.42px;font-size:18.4px;font-weight:700;color:#000;transform:scaleX(0.9860);transform-origin:0 0;">Type</div>
<div class="t" style="left:366.80px;top:681.00px;font-size:17.6px;color:#111;transform:scaleX(0.9458);transform-origin:0 0;">test</div>
<div class="t" style="left:218.80px;top:709.62px;font-size:18.4px;font-weight:700;color:#000;transform:scaleX(0.9869);transform-origin:0 0;">UOM</div>
<div class="t" style="left:366.80px;top:710.90px;font-size:17.6px;color:#111;">fs</div>
<div class="t" style="left:218.80px;top:738.42px;font-size:18.4px;font-weight:700;color:#000;transform:scaleX(0.9457);transform-origin:0 0;">Description</div>
<div class="t" style="left:366.80px;top:740.20px;font-size:17.6px;color:#111;transform:scaleX(0.9381);transform-origin:0 0;">CMHG0</div>
<div class="r" style="left:748px;top:515px;width:535px;height:277px;border:1px solid #000;box-sizing:border-box;"></div>
<div class="r" style="left:749px;top:516px;width:533px;height:67px;background:#eeeeee;"></div>
<div class="r" style="left:749px;top:583px;width:533px;height:1px;background:#000;"></div>
<div class="t" style="left:757.80px;top:528.92px;font-size:18.4px;font-weight:700;color:#000;transform:scaleX(0.9451);transform-origin:0 0;">Calibration Result:</div>
<div class="t" style="left:938.30px;top:528.62px;font-size:18.4px;font-weight:700;color:#000;transform:scaleX(0.8696);transform-origin:0 0;">PASS</div>
<div class="t" style="left:757.80px;top:553.32px;font-size:18.4px;font-weight:700;color:#000;transform:scaleX(0.9547);transform-origin:0 0;">Cal. Due Date:</div>
<div class="t" style="left:938.30px;top:553.42px;font-size:18.4px;font-weight:700;color:#000;transform:scaleX(1.0186);transform-origin:0 0;">4/27/2023</div>
<div class="t" style="left:758.30px;top:592.42px;font-size:18.4px;font-weight:700;color:#000;transform:scaleX(0.9538);transform-origin:0 0;">Cal Date</div>
<div class="t" style="left:938.30px;top:593.70px;font-size:17.6px;color:#111;transform:scaleX(1.0444);transform-origin:0 0;">1/16/2023</div>
<div class="t" style="left:758.30px;top:622.72px;font-size:18.4px;font-weight:700;color:#000;transform:scaleX(0.9690);transform-origin:0 0;">Service Technician</div>
<div class="r" style="left:915px;top:620px;width:20px;height:24px;background:#fff;"></div>
<div class="t" style="left:938.30px;top:622.40px;font-size:17.6px;color:#111;transform:scaleX(0.9494);transform-origin:0 0;">JOHN DOE</div>
<div class="t" style="left:758.30px;top:651.02px;font-size:18.4px;font-weight:700;color:#000;transform:scaleX(1.0148);transform-origin:0 0;">Temp./RH</div>
<div class="t" style="left:938.30px;top:652.90px;font-size:17.6px;color:#111;">0</div>
<div class="t" style="left:981.30px;top:652.30px;font-size:17.6px;color:#111;">F</div>
<div class="t" style="left:1004.20px;top:659.43px;font-size:16.5px;color:#111;">/</div>
<div class="t" style="left:1026.60px;top:652.30px;font-size:17.6px;color:#111;">0</div>
<div class="t" style="left:758.30px;top:678.92px;font-size:18.4px;font-weight:700;color:#000;transform:scaleX(0.9681);transform-origin:0 0;">Cal. Interval</div>
<div class="t" style="left:938.30px;top:681.00px;font-size:17.6px;color:#111;">2</div>
<div class="t" style="left:981.30px;top:679.70px;font-size:17.6px;color:#111;transform:scaleX(0.9516);transform-origin:0 0;">MONTHS</div>
<div class="t" style="left:759.80px;top:712.82px;font-size:18.4px;font-weight:700;color:#000;transform:scaleX(0.9209);transform-origin:0 0;">As Found Result:</div>
<div class="t" style="left:762.40px;top:741.62px;font-size:18.4px;font-weight:700;color:#000;transform:scaleX(0.9306);transform-origin:0 0;">As Left Result:</div>
<div class="t" style="left:212.20px;top:855.03px;font-size:20.4px;font-weight:700;color:#000;transform:scaleX(0.9924);transform-origin:0 0;">Test Points</div>
<div class="r" style="left:212px;top:874px;width:108px;height:1.5px;background:#000;"></div>
<div class="r" style="left:207px;top:883px;width:1080px;height:12px;background:#c8c7c9;"></div>
</body></html>
